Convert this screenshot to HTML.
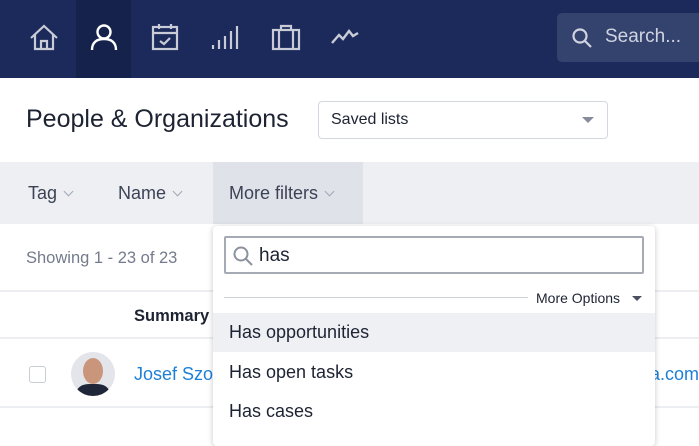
<!DOCTYPE html>
<html><head><meta charset="utf-8"><style>
*{margin:0;padding:0;box-sizing:border-box}
body{width:699px;height:431px;overflow:hidden;background:#fff;font-family:"Liberation Sans",sans-serif;position:relative}
.nav{position:absolute;left:0;top:0;width:699px;height:78px;background:#1b2a5b}
.act{position:absolute;left:76px;top:0;width:55px;height:78px;background:#15234c}
.ic{position:absolute;top:22px}
.srch{position:absolute;left:557px;top:13px;width:150px;height:49px;background:#34426e;border-radius:5px;color:#d0d4e0;font-size:19px}
.abs{position:absolute}
.fbar{position:absolute;left:0;top:162px;width:699px;height:62px;background:#edeff3}
.chev{display:inline-block;width:7px;height:7px;border-right:1.5px solid #a0a6b4;border-bottom:1.5px solid #a0a6b4;transform:rotate(45deg);margin-left:8px;position:relative;top:-4px}
.hl{position:absolute;left:0;width:699px;height:2px;background:#eceef2}
.dd{position:absolute;left:213px;top:226px;width:442px;height:220px;background:#fff;border-radius:4px;box-shadow:0 1px 6px rgba(0,0,0,.22)}
.item{position:absolute;left:0;width:442px;height:39px;font-size:18px;color:#1d2333;padding-left:16px;line-height:39px}
</style></head><body>
<div class="nav">
<div class="act"></div>
<svg class="ic" style="left:28px" width="32" height="32" viewBox="0 0 32 32" fill="none" stroke="#c9ccd6" stroke-width="2.2"><path d="M3 16 L16 4 L29 16"/><path d="M7 12 V27 H25 V12"/><path d="M13 27 V19 H19 V27"/></svg>
<svg class="ic" style="left:88px" width="32" height="32" viewBox="0 0 32 32" fill="none" stroke="#fff" stroke-width="2.4"><circle cx="16" cy="10" r="6.5"/><path d="M4 28 C4 20 9 17 16 17 C23 17 28 20 28 28"/></svg>
<svg class="ic" style="left:151px" width="28" height="32" viewBox="0 0 28 32" fill="none" stroke="#c9ccd6" stroke-width="2.2"><rect x="2" y="5" width="24" height="22"/><path d="M2 11 H26 M8 2 V7 M20 2 V7 M9 19 L13 22 L19 16"/></svg>
<svg class="ic" style="left:210px" width="30" height="32" viewBox="0 0 30 32" fill="none" stroke="#c9ccd6" stroke-width="2.2"><path d="M3 27 V23 M9 27 V18 M15 27 V14 M21 27 V9 M27 27 V4"/></svg>
<svg class="ic" style="left:270px" width="32" height="32" viewBox="0 0 32 32" fill="none" stroke="#c9ccd6" stroke-width="2.2"><rect x="3" y="8" width="26" height="19"/><path d="M11 8 V4 H21 V8 M9 8 V27 M23 8 V27"/></svg>
<svg class="ic" style="left:330px" width="32" height="32" viewBox="0 0 32 32" fill="none" stroke="#c9ccd6" stroke-width="2.4"><path d="M2 21 L9 13 L13 17 L19 9 L23 14 L28 11"/></svg>
<div class="srch"><svg style="position:absolute;left:14px;top:14px" width="22" height="22" viewBox="0 0 22 22" fill="none" stroke="#d0d4e0" stroke-width="2.2"><circle cx="9" cy="9" r="6.5"/><path d="M14 14 L20 20"/></svg><span style="position:absolute;left:48px;top:13px">Search...</span></div>
</div>
<div class="abs" style="left:26px;top:105px;font-size:25px;color:#1d2333">People &amp; Organizations</div>
<div class="abs" style="left:318px;top:101px;width:290px;height:38px;border:1.5px solid #d3d7df;border-radius:4px;font-size:16px;color:#1d2333;padding:9px 12px">Saved lists<div style="position:absolute;right:13px;top:15px;border-left:6px solid transparent;border-right:6px solid transparent;border-top:6px solid #868c9c"></div></div>
<div class="fbar">
<div class="abs" style="left:213px;top:0;width:150px;height:62px;background:#dfe2e8"></div>
<div class="abs" style="left:28px;top:21px;font-size:18px;color:#3c4356">Tag<span class="chev"></span></div>
<div class="abs" style="left:118px;top:21px;font-size:18px;color:#3c4356">Name<span class="chev"></span></div>
<div class="abs" style="left:229px;top:21px;font-size:18px;color:#3c4356">More filters<span class="chev"></span></div>
</div>
<div class="abs" style="left:26px;top:249px;font-size:16.5px;color:#747b8c">Showing 1 - 23 of 23</div>
<div class="hl" style="top:290px"></div>
<div class="abs" style="left:134px;top:307px;font-size:16.5px;color:#1d2333;font-weight:bold">Summary</div>
<div class="hl" style="top:337px"></div>
<div class="abs" style="left:29px;top:366px;width:17px;height:17px;border:1.5px solid #c8ccd5;border-radius:3px"></div>
<div class="abs" style="left:71px;top:352px;width:44px;height:44px;border-radius:50%;background:#e3e5ea;overflow:hidden"><div style="position:absolute;left:12px;top:6px;width:20px;height:26px;border-radius:50%;background:#c9967c"></div><div style="position:absolute;left:6px;top:32px;width:32px;height:18px;border-radius:40% 40% 0 0;background:#20263a"></div></div>
<div class="abs" style="left:134px;top:364px;font-size:18px;color:#1e7fd6">Josef Szoo</div>
<div class="abs" style="left:650px;top:364px;font-size:18px;color:#1e7fd6">a.com</div>
<div class="hl" style="top:406px"></div>
<div class="dd">
<div class="abs" style="left:11px;top:10px;width:420px;height:38px;border:2px solid #a5aab5;border-radius:2px"><svg style="position:absolute;left:6px;top:7px" width="22" height="22" viewBox="0 0 22 22" fill="none" stroke="#8c919e" stroke-width="2"><circle cx="9" cy="9" r="6.5"/><path d="M14 14 L20 20"/></svg><span style="position:absolute;left:33px;top:7px;font-size:19px;color:#1d2333">has</span></div>
<div class="abs" style="left:11px;top:71px;width:304px;height:1px;background:#ccd0d8"></div>
<div class="abs" style="left:323px;top:64px;font-size:14px;color:#1d2333">More Options</div>
<div class="abs" style="left:419px;top:70px;border-left:5px solid transparent;border-right:5px solid transparent;border-top:5px solid #4a5062"></div>
<div class="item" style="top:87px;background:#eff0f4">Has opportunities</div>
<div class="item" style="top:127px">Has open tasks</div>
<div class="item" style="top:166px">Has cases</div>
</div>
</body></html>
